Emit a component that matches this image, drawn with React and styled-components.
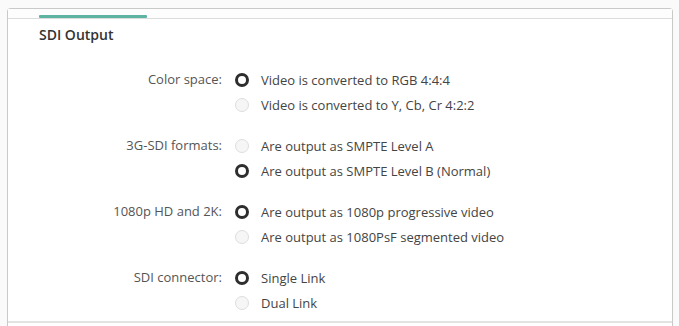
import React from "react";
import styled, { createGlobalStyle } from "styled-components";

const Global = createGlobalStyle`
  html, body { margin: 0; padding: 0; background: #fafafa; }
  body { font-family: "Open Sans", "Liberation Sans", sans-serif; color: #3c3c3c; }
`;

const Page = styled.div`
  width: 679px;
  height: 326px;
  padding: 8px 6px 0 7px;
  box-sizing: border-box;
  overflow: hidden;
`;

const Card = styled.div`
  background: #fff;
  border: 1px solid #c9c9c9;
  border-bottom: none;
  border-radius: 4px 4px 0 0;
  height: 318px;
  box-sizing: border-box;
  display: flex;
  flex-direction: column;
`;

const TabStrip = styled.div`
  height: 9px;
  border-bottom: 1px solid #dcdcdc;
  padding-left: 31px;
  display: flex;
  align-items: flex-end;
  background: #fdfdfd;
`;

const TabIndicator = styled.div`
  width: 108px;
  height: 3px;
  background: #5fb3a3;
  border-radius: 1px;
`;

const Title = styled.div`
  font-size: 14px;
  font-weight: 600;
  color: #333;
  line-height: 20px;
  padding: 6px 0 0 31px;
  height: 28px;
  box-sizing: border-box;
`;

const Groups = styled.div`
  display: flex;
  flex-direction: column;
  gap: 16px;
  padding-top: 20px;
  flex: 1;
`;

const Group = styled.div`
  display: grid;
  grid-template-columns: 214px 1fr;
  column-gap: 13px;
`;

const Label = styled.div`
  font-size: 13px;
  color: #555;
  text-align: right;
  height: 25px;
  line-height: 25px;
`;

const Options = styled.div`
  display: flex;
  flex-direction: column;
`;

const Option = styled.div`
  display: flex;
  align-items: center;
  gap: 12px;
  height: 25px;
  font-size: 13px;
  color: #444;
`;

const Radio = styled.span`
  width: 14px;
  height: 14px;
  border-radius: 50%;
  box-sizing: border-box;
  flex: none;
  border: ${(p) => (p.$checked ? "3.5px solid #2e2e2e" : "1.5px solid #dedede")};
  background: ${(p) => (p.$checked ? "#fff" : "#f6f6f6")};
`;

const BottomLine = styled.div`
  height: 2px;
  background: #e2e2e2;
  margin-bottom: 3px;
`;

const groups = [
  { label: "Color space:", options: ["Video is converted to RGB 4:4:4", "Video is converted to Y, Cb, Cr 4:2:2"], sel: 0 },
  { label: "3G-SDI formats:", options: ["Are output as SMPTE Level A", "Are output as SMPTE Level B (Normal)"], sel: 1 },
  { label: "1080p HD and 2K:", options: ["Are output as 1080p progressive video", "Are output as 1080PsF segmented video"], sel: 0 },
  { label: "SDI connector:", options: ["Single Link", "Dual Link"], sel: 0 },
];

export default function App() {
  return (
    <>
      <Global />
      <Page>
        <Card>
          <TabStrip>
            <TabIndicator />
          </TabStrip>
          <Title>SDI Output</Title>
          <Groups>
            {groups.map((g) => (
              <Group key={g.label}>
                <Label>{g.label}</Label>
                <Options>
                  {g.options.map((o, i) => (
                    <Option key={o}>
                      <Radio $checked={i === g.sel} />
                      {o}
                    </Option>
                  ))}
                </Options>
              </Group>
            ))}
          </Groups>
          <BottomLine />
        </Card>
      </Page>
    </>
  );
}
